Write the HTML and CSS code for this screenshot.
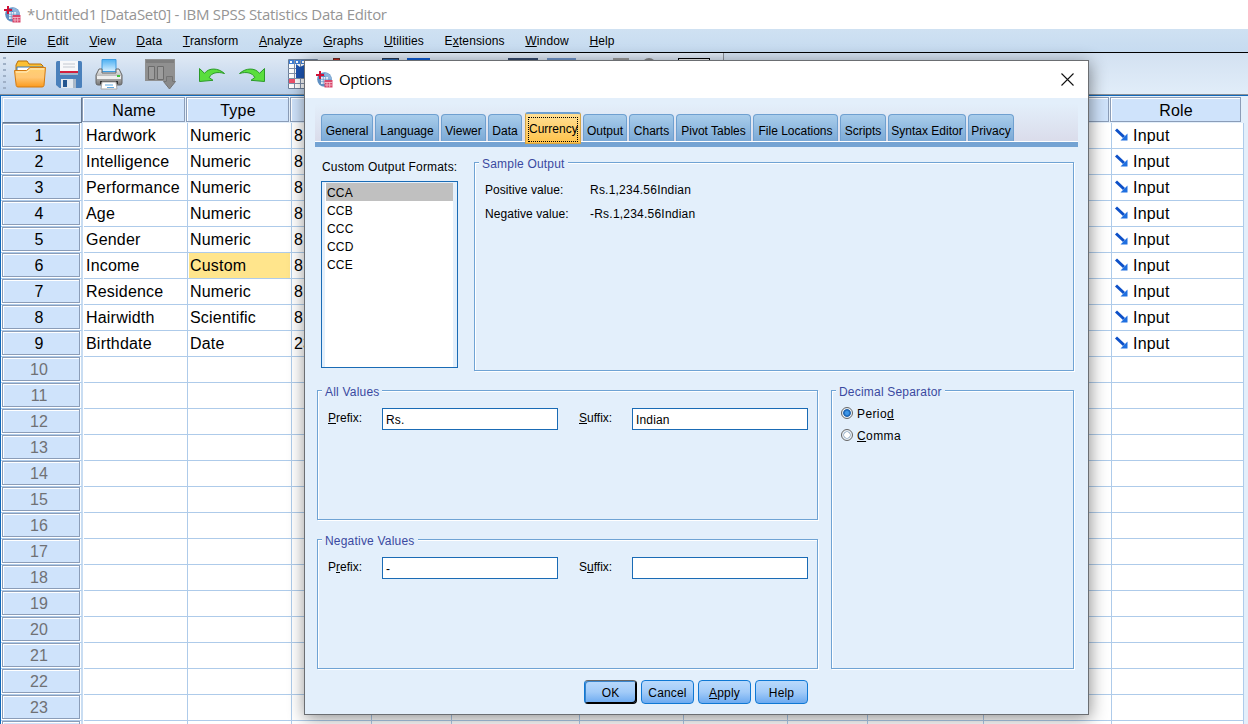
FILE: index.html
```html
<!DOCTYPE html>
<html lang="en">
<head>
  <meta charset="UTF-8">
  <meta name="viewport" content="width=device-width, initial-scale=1.0">
  <title>*Untitled1 [DataSet0] - IBM SPSS Statistics Data Editor</title>
  <link rel="stylesheet" href="styles.css">
</head>
<body>
  <svg width="0" height="0" class="defs">
    <defs>
      <linearGradient id="folder" x1="0" y1="0" x2="0" y2="1"><stop offset="0" stop-color="#ffd070"/><stop offset=".5" stop-color="#ffc876"/><stop offset="1" stop-color="#fb9a1c"/></linearGradient>
      <linearGradient id="printer" x1="0" y1="0" x2="0" y2="1"><stop offset="0" stop-color="#f2f2f2"/><stop offset="1" stop-color="#777"/></linearGradient>
      <linearGradient id="paper" x1="0" y1="0" x2="0" y2="1"><stop offset="0" stop-color="#4db0f2"/><stop offset="1" stop-color="#d9f0ff"/></linearGradient>
      <symbol id="logo" viewBox="0 0 17 17">
        <circle cx="8.5" cy="8.5" r="7.3" fill="#5e8fc2"/>
        <path d="M9 1.4a7.2 7.2 0 0 1 6.6 7H12L8 4z" fill="#8db4dc"/>
        <path d="M5 6h7v7H5z" fill="#e6eff8"/>
        <path d="M5 8.3h7M5 10.6h7M7.3 6v7M9.6 6v7" stroke="#6a96c8" stroke-width=".7"/>
        <path d="M4 0v8M0 4h8" stroke="#cf1237" stroke-width="2"/>
        <path d="M8.5 9h8v7.5h-8z" fill="#d8456a"/>
        <path d="M9 11.5h7.5M9 14h7.5M11 11v5.5M13.7 11v5.5" stroke="#f5c3cf" stroke-width=".8"/>
      </symbol>
      <symbol id="arrow" viewBox="0 0 13 13">
        <path d="M1 1.500 9 9" stroke="#0d50c8" stroke-width="3"/>
        <path d="M12.500 5.500v7h-7z" fill="#1f6fe0"/>
      </symbol>
    </defs>
  </svg>

  <div class="titlebar">
    <svg class="logo"><use href="#logo"/></svg>
    <span>*Untitled1 [DataSet0] - IBM SPSS Statistics Data Editor</span>
  </div>

  <ul class="menu">
    <li><u>F</u>ile</li>
    <li><u>E</u>dit</li>
    <li><u>V</u>iew</li>
    <li><u>D</u>ata</li>
    <li><u>T</u>ransform</li>
    <li><u>A</u>nalyze</li>
    <li><u>G</u>raphs</li>
    <li><u>U</u>tilities</li>
    <li>E<u>x</u>tensions</li>
    <li><u>W</u>indow</li>
    <li><u>H</u>elp</li>
  </ul>

  <div class="toolbar">
    <div class="grip"></div>
    <!-- open -->
    <svg class="open" width="34" height="30" viewBox="0 0 34 30">
      <path d="M3 6l2-4h9l2 3h12l2 2v6H3z" fill="#fcc033" stroke="#b86e08"/>
      <path d="M4 8h26v6H4z" fill="#fff" stroke="#3b78b8"/>
      <path d="M1.500 11.500h12l3.500-3h15.500L31 26.500q-.3 1.500-2 1.500H5q-1.500 0-1.800-1.500z" fill="url(#folder)" stroke="#d37a10"/>
      <path d="M3 13h11l3.500-3H31" stroke="#fff0c8" fill="none"/>
    </svg>
    <!-- save -->
    <svg class="save" width="26" height="27" viewBox="0 0 26 27">
      <path d="M0 1.500Q0 0 1.500 0h23Q26 0 26 1.500v24q0 1.500-1.500 1.500h-21L0 24z" fill="#4a80bb"/>
      <path d="M4 0h18v11H4z" fill="#f7f8fa"/>
      <path d="M7 3h12M7 6h12" stroke="#c3c8d0"/>
      <path d="M4 10h18v2H4z" fill="#d3203f"/>
      <path d="M4 12h18v2H4z" fill="#9fb5cc"/>
      <path d="M5 18h15v9H5z" fill="#e3e9ef"/>
      <path d="M7 19h4v7H7z" fill="#24568f"/>
      <path d="M17 18h3v9h-3z" fill="#a9b8c8"/>
    </svg>
    <!-- print -->
    <svg class="print" width="28" height="31" viewBox="0 0 28 31">
      <path d="M7 .5h14v12H7z" fill="url(#paper)" stroke="#3c9be0"/>
      <path d="M4 10h3v4h14v-4h3l3 6v8q0 2-2 2H3q-2 0-2-2v-8z" fill="url(#printer)" stroke="#666"/>
      <path d="M2 17h24v3H2z" fill="#eee"/>
      <path d="M22 16h3v2h-3z" fill="#42c23b"/>
      <path d="M5 22h18v3H5z" fill="#333"/>
      <path d="M7 23h14l1 7H6z" fill="#fff" stroke="#aaa"/>
      <path d="M10 26h8M12 28.500h7" stroke="#5fa8e0"/>
    </svg>
    <!-- recall dialogs (disabled) -->
    <svg class="recall" width="31" height="31" viewBox="0 0 31 31">
      <path d="M0 0h30v22H0z" fill="#909090"/>
      <path d="M1 1h28v3H1z" fill="#7e7e7e"/>
      <path d="M3.500 7.500h6v13h-6zM12.500 7.500h6v13h-6z" fill="#9c9c9c" stroke="#6c6c6c"/>
      <path d="M21.500 17.500h6v5h3L24.500 30l-6-7.500h3z" fill="#8a8a8a" stroke="#747474"/>
    </svg>
    <!-- undo / redo -->
    <svg class="undo" width="28" height="16" viewBox="0 0 28 16">
      <path d="M1.500 1.500v13l13.500-1.200-3.800-2.800C13.500 6 19 4.300 26.500 6.500 20 .7 11 .5 6.500 6.300z" fill="#5ade3e" stroke="#2b9a28"/>
    </svg>
    <svg class="redo" width="28" height="16" viewBox="0 0 28 16">
      <path d="M26.500 1.500v13L13 13.300l3.800-2.800C14.500 6 9 4.300 1.500 6.500 8 .7 17 .5 21.500 6.300z" fill="#5ade3e" stroke="#2b9a28"/>
    </svg>
    <!-- go to case -->
    <svg class="goto" width="30" height="30" viewBox="0 0 30 30">
      <path d="M.5.500h29v29H.5z" fill="#fff" stroke="#6c7f99"/>
      <path d="M1 1h28v4H1z" fill="#3f7fd6"/>
      <path d="M2 2h2v2H2zM8 2h2v2H8zM14 2h2v2h-2z" fill="#fff"/>
      <path d="M6.500 1v28M12.500 1v28M0 9.500h30M0 14.500h30M0 19.500h30M0 24.500h30" stroke="#8291ab"/>
      <path d="M1 20h6v4H1z" fill="#f0506a"/>
      <path d="M8 5l4 3 6-3v14H8z" fill="#1d55b4"/>
    </svg>
    <i class="tool red"></i>
    <i class="tool vars"></i>
    <i class="tool find"></i>
    <i class="tool split"></i>
    <i class="tool weight"></i>
    <i class="tool gray"></i>
    <i class="tool round"></i>
    <i class="tool abc"></i>
    <i class="end"></i>
  </div>

  <div class="sheet"></div>

  <div class="dialog">
    <div class="dialog-title">
      <svg class="logo"><use href="#logo"/></svg>
      <span>Options</span>
      <svg class="close" width="13" height="13" viewBox="0 0 13 13"><path d="M.5.500l12 12M12.500.500l-12 12" stroke="#111" stroke-width="1.100"/></svg>
    </div>

    <ul class="tabs">
      <li class="general">General</li>
      <li class="language">Language</li>
      <li class="viewer">Viewer</li>
      <li class="data">Data</li>
      <li class="currency active"><span>Currency</span></li>
      <li class="output">Output</li>
      <li class="charts">Charts</li>
      <li class="pivot">Pivot Tables</li>
      <li class="locations">File Locations</li>
      <li class="scripts">Scripts</li>
      <li class="syntax">Syntax Editor</li>
      <li class="privacy">Privacy</li>
    </ul>

    <div class="top">
      <div class="formats">
        <label>Custom Output Formats:</label>
        <ul>
          <li class="selected">CCA</li>
          <li>CCB</li>
          <li>CCC</li>
          <li>CCD</li>
          <li>CCE</li>
        </ul>
      </div>
      <div class="group sample">
        <h4>Sample Output</h4>
        <dl>
          <dt>Positive value:</dt><dd>Rs.1,234.56Indian</dd>
          <dt>Negative value:</dt><dd>-Rs.1,234.56Indian</dd>
        </dl>
      </div>
    </div>

    <div class="bottom">
      <div class="group values all">
        <h4>All Values</h4>
        <label><u>P</u>refix:</label>
        <div class="input">Rs.</div>
        <label><u>S</u>uffix:</label>
        <div class="input">Indian</div>
      </div>
      <div class="group values negative">
        <h4>Negative Values</h4>
        <label>P<u>r</u>efix:</label>
        <div class="input">-</div>
        <label>S<u>u</u>ffix:</label>
        <div class="input"></div>
      </div>
      <div class="group decimal">
        <h4>Decimal Separator</h4>
        <div class="radio checked"><i></i><span>Perio<u>d</u></span></div>
        <div class="radio"><i></i><span><u>C</u>omma</span></div>
      </div>
    </div>

    <div class="buttons">
      <div class="btn default">OK</div>
      <div class="btn">Cancel</div>
      <div class="btn"><u>A</u>pply</div>
      <div class="btn">Help</div>
    </div>
  </div>

  <script>
    const variables = [
      ['Hardwork', 'Numeric', '8'],
      ['Intelligence', 'Numeric', '8'],
      ['Performance', 'Numeric', '8'],
      ['Age', 'Numeric', '8'],
      ['Gender', 'Numeric', '8'],
      ['Income', 'Custom', '8'],
      ['Residence', 'Numeric', '8'],
      ['Hairwidth', 'Scientific', '8'],
      ['Birthdate', 'Date', '23']
    ]
    const visibleRows = 23
    const sheet = document.querySelector('.sheet')

    // header: name, type, eight columns behind the dialog, role
    let html = '<div class="row head"><div class="corner"></div><div>Name</div><div>Type</div>'
    html += '<div></div>'.repeat(8) + '<div>Role</div></div>'

    // one extra row peeks out at the bottom edge
    for (let i = 0; i <= visibleRows; i++) {
      const v = variables[i]
      const num = i < visibleRows ? i + 1 : ''
      html += `<div class="row"><div class="num${v ? '' : ' empty'}"><span>${num}</span></div>`
      if (v) {
        html += `<div>${v[0]}</div><div class="${v[1] === 'Custom' ? 'current' : ''}">${v[1]}</div><div>${v[2]}</div>`
        html += '<div></div>'.repeat(7)
        html += '<div class="role"><svg width="13" height="13"><use href="#arrow"/></svg>Input</div>'
      } else {
        html += '<div></div>'.repeat(11)
      }
      html += '</div>'
    }
    sheet.innerHTML = html
  </script>
</body>
</html>
```
FILE: styles.css
```css
* {
  box-sizing: border-box;
}

body {
  margin: 0;
  width: 1248px;
  height: 724px;
  overflow: hidden;
  position: relative;
  background: #fff;
  color: #000;
  font: 12px/14px "Liberation Sans", Arial, sans-serif;
}

ul, dl, dd, h4 {
  margin: 0;
  padding: 0;
  list-style: none;
}

u {
  text-underline-offset: 1px;
}

.defs {
  display: block;
  position: absolute;
}

.logo {
  width: 17px;
  height: 17px;
  flex: none;
}

.titlebar {
  height: 29px;
  padding: 0 0 1px 4px;
  display: flex;
  align-items: center;
  gap: 6px;
  color: #959595;
  font: 15px/20px "Open Sans", "Noto Sans", sans-serif;
  letter-spacing: -.29px;
  white-space: nowrap;
}

.menu {
  height: 24px;
  padding: 0 7px;
  display: flex;
  gap: 20.6px;
  align-items: center;
  letter-spacing: .14px;
  background: linear-gradient(#cfe1f2, #c6dbf0);
  border-bottom: 1px solid #000;
}

.toolbar {
  height: 42px;
  display: flex;
  align-items: flex-start;
  background: linear-gradient(#e1eaf5, #bad0ea);
  border-bottom: 1px solid #8b9097;
}

.toolbar > * {
  flex: none;
}

.grip {
  width: 3px;
  height: 38px;
  margin: 2px 7px 0 3px;
  background: radial-gradient(circle, #9fb0c6 1.2px, transparent 1.5px) 0 0 / 3px 6px;
}

.open { margin-top: 6px; }
.save { margin: 8px 0 0 9px; }
.print { margin: 6px 0 0 13px; }
.recall { margin: 6px 0 0 22px; }
.undo { margin: 14px 0 0 22px; }
.redo { margin: 14px 0 0 12px; }
.goto { margin: 6px 0 0 22px; }

.tool {
  height: 26px;
  margin-top: 5px;
}

.red {
  width: 7px;
  margin-left: 15px;
  background: #c3281c;
  border: 1px solid #6b2a25;
}

.vars {
  width: 17px;
  margin-left: 42px;
  background: #2766ae;
  border: 1px solid #26344d;
}

.find {
  width: 23px;
  margin-left: 8px;
  background: #0b59d0;
}

.split {
  width: 30px;
  margin-left: 78px;
  background: #34496c;
}

.weight {
  width: 29px;
  margin-left: 9px;
  background: #6e93c8;
}

.gray {
  width: 16px;
  margin-left: 37px;
  background: #9a9a9a;
}

.round {
  width: 14px;
  margin-left: 13px;
  border: 2px solid #888;
  border-radius: 7px;
}

.abc {
  width: 32px;
  margin-left: 22px;
  background: #eee;
  border: 1px solid #000;
}

.end {
  flex: 1 !important;
  height: 41px;
  margin-left: 13px;
  background: linear-gradient(#d3e1f1, #e1edf9);
  border-left: 1px solid #8b9097;
}

/* data sheet */
.sheet {
  height: 629px;
  overflow: hidden;
  background: #e3effb;
  border-top: 1px solid #1068ba;
  border-left: 1px solid #1068ba;
  font-size: 16px;
  letter-spacing: .2px;
}

.row {
  width: 1243px;
  height: 26px;
  display: grid;
  grid-template-columns: 83px 104px 104px 80px 80px 128px 104px 104px 80px 116px 128px 132px;
  background: #fff;
}

.row > div {
  padding-left: 2px;
  line-height: 25px;
  border-right: 1px solid #aecbea;
  border-bottom: 1px solid #aecbea;
}

.row > .num {
  width: 82px;
  padding: 0 1px 0 1px;
  background: #fff;
  border-right: 2px solid #c9ddf2;
}

.num span {
  height: 24px;
  display: block;
  line-height: 23px;
  text-align: center;
  padding-right: 4px;
  letter-spacing: 0;
  background: #cfe3fb;
  border: 1px solid #8b9db8;
  box-shadow: inset 1px 1px 0 #fff;
}

.empty span {
  color: #6f7175;
}

.row > .current {
  background: #ffe58c content-box;
  padding: 0 1px;
  text-indent: 1px;
}

.row > .role {
  padding-left: 3px;
  display: flex;
  gap: 5px;
}

.role svg {
  margin-top: 5px;
}

.row.head {
  height: 27px;
  padding-top: 1px;
  background: #e3effb;
}

.row.head > div {
  height: 25px;
  margin: 0 3px 0 -2px;
  padding: 0 0 0 1px;
  width: calc(100% - 1px);
  text-align: center;
  line-height: 25px;
  background: #cfe3fb;
  border: 1px solid #8b9db8;
  box-shadow: inset 1px 1px 0 #fff;
}

.row.head > .corner {
  width: 80px;
  height: 26px;
  margin-left: 1px;
  border-color: #c3d7ee #66788f #66788f #c3d7ee;
}

/* options dialog */
.dialog {
  position: absolute;
  left: 304px;
  top: 60px;
  width: 785px;
  height: 655px;
  background: #e3effb;
  border: 1px solid #6b6e72;
  box-shadow: 1px 3px 16px rgba(0, 0, 0, .45);
}

.dialog-title {
  height: 37px;
  padding: 0 14px 0 11px;
  display: flex;
  align-items: center;
  gap: 6px;
  background: #fff;
  font: 15px/20px "Open Sans", "Noto Sans", sans-serif;
  letter-spacing: -.4px;
}

.dialog-title span {
  margin-top: -1px;
}

.close {
  margin: -1px 0 0 auto;
}

.tabs {
  height: 49px;
  margin: 0 10px;
  padding: 0 0 5px 6px;
  display: flex;
  align-items: flex-end;
  gap: 2px;
  background: linear-gradient(#74a3d3, #74a3d3) 0 100% / 100% 5px no-repeat,
    linear-gradient(#fff, #fff) 0 43px / 100% 1px no-repeat,
    linear-gradient(#e3effb 10%, #d9d9e8);
}

.tabs li {
  flex: none;
  height: 27px;
  margin-bottom: 1px;
  padding-top: 9px;
  text-align: center;
  white-space: nowrap;
  background: linear-gradient(#a9cdeb, #7ba9d6);
  border: 1px solid #6fa0d0;
  border-bottom: 0;
  border-radius: 4px 4px 0 0;
}

.general { width: 52px; }
.language { width: 64px; }
.viewer { width: 45px; }
.data { width: 34px; }
.output { width: 44px; }
.charts { width: 45px; }
.pivot { width: 75px; }
.locations { width: 85px; }
.scripts { width: 46px; }
.syntax { width: 78px; }
.privacy { width: 46px; }

.tabs .active {
  width: 56px;
  height: 32px;
  margin: 0 0 -2px 1px;
  padding: 3px 2px;
  background: linear-gradient(#ffdf94, #ffc24a);
  border: 1px solid #d3a445;
  border-top: 2px solid #6fa0d0;
  border-radius: 3px 3px 0 0;
}

.active span {
  display: block;
  width: 50px;
  height: 25px;
  padding-top: 4px;
  border: 1px dotted #000;
}

.top {
  height: 237px;
  padding: 15px 14px 0 16px;
  display: flex;
  gap: 16px;
}

.formats {
  width: 137px;
  white-space: nowrap;
}

.formats label {
  display: block;
  height: 19px;
  margin: -2px 0 0 1px;
  letter-spacing: .18px;
}

.formats ul {
  height: 187px;
  margin-top: 2px;
  padding: 1px 4px 0 3px;
  background: #fff content-box;
  border: 1px solid #1a6bb5;
}

.formats li {
  height: 18px;
  margin-left: 1px;
  padding: 3px 0 0 1px;
  letter-spacing: .15px;
}

.formats .selected {
  background: #c0c0c0;
}

.group {
  position: relative;
  border: 1px solid #6fa3d4;
  box-shadow: 1px 1px 0 #fff, inset 1px 1px 0 #fff;
}

.group h4 {
  position: absolute;
  left: 4px;
  top: -6px;
  padding: 0 3px;
  font-weight: normal;
  color: #3a49a0;
  background: #e3effb;
  letter-spacing: .2px;
  white-space: nowrap;
}

.sample {
  width: 600px;
  height: 209px;
}

.sample dl {
  display: grid;
  grid-template-columns: 105px auto;
  row-gap: 10px;
  padding: 20px 10px;
}

.sample dt {
  letter-spacing: .06px;
}

.sample dd {
  letter-spacing: .22px;
}

.bottom {
  padding: 6px 14px 0 12px;
  display: grid;
  grid-template-columns: 501px 243px;
  grid-template-rows: 130px 130px;
  gap: 19px 13px;
}

.values {
  padding: 17px 9px 0 10px;
  display: grid;
  grid-template-columns: 54px 177px 20px 53px 176px;
  align-items: start;
}

.values label {
  padding-top: 3px;
}

.values label:nth-of-type(2) {
  grid-column: 3 / 5;
  padding-left: 20px;
}

.input {
  width: 177px;
  height: 22px;
  padding: 4px 0 0 3px;
  letter-spacing: .15px;
  background: #fff;
  border: 1px solid #1a6bb5;
}

.values .input {
  width: 176px;
}

.decimal {
  grid-column: 2;
  grid-row: 1 / 3;
  padding: 15px 8px;
}

.radio {
  height: 22px;
  padding: 1px 0 0 1px;
  display: flex;
  align-items: flex-start;
  letter-spacing: .4px;
}

.radio i {
  width: 12px;
  height: 12px;
  margin: 0 4px 0 0;
  border: 1px solid #666;
  border-radius: 50%;
  background: radial-gradient(circle, #fff 2.5px, #8aa5bf 3.2px, #e8eef4 4px);
}

.radio.checked i {
  background: radial-gradient(circle, #3d96e8 1.5px, #1058a8 3.4px, #e8eef4 4.3px);
}

.buttons {
  margin: 11px 2px 0 0;
  display: flex;
  justify-content: center;
  gap: 4px;
}

.btn {
  width: 53px;
  height: 24px;
  padding: 5px 0 0 1px;
  text-align: center;
  letter-spacing: .15px;
  background: linear-gradient(#b9d9fc, #a2cbf8 50%, #6caaf0);
  border: 1px solid #0f78d4;
  border-radius: 4px;
}

.btn.default {
  border: 1px solid #000;
  border-top-color: #666;
  border-left-color: #0f78d4;
  box-shadow: inset -1px -1px 0 #000, inset 1px 1px 0 #3b85cc;
}
```
